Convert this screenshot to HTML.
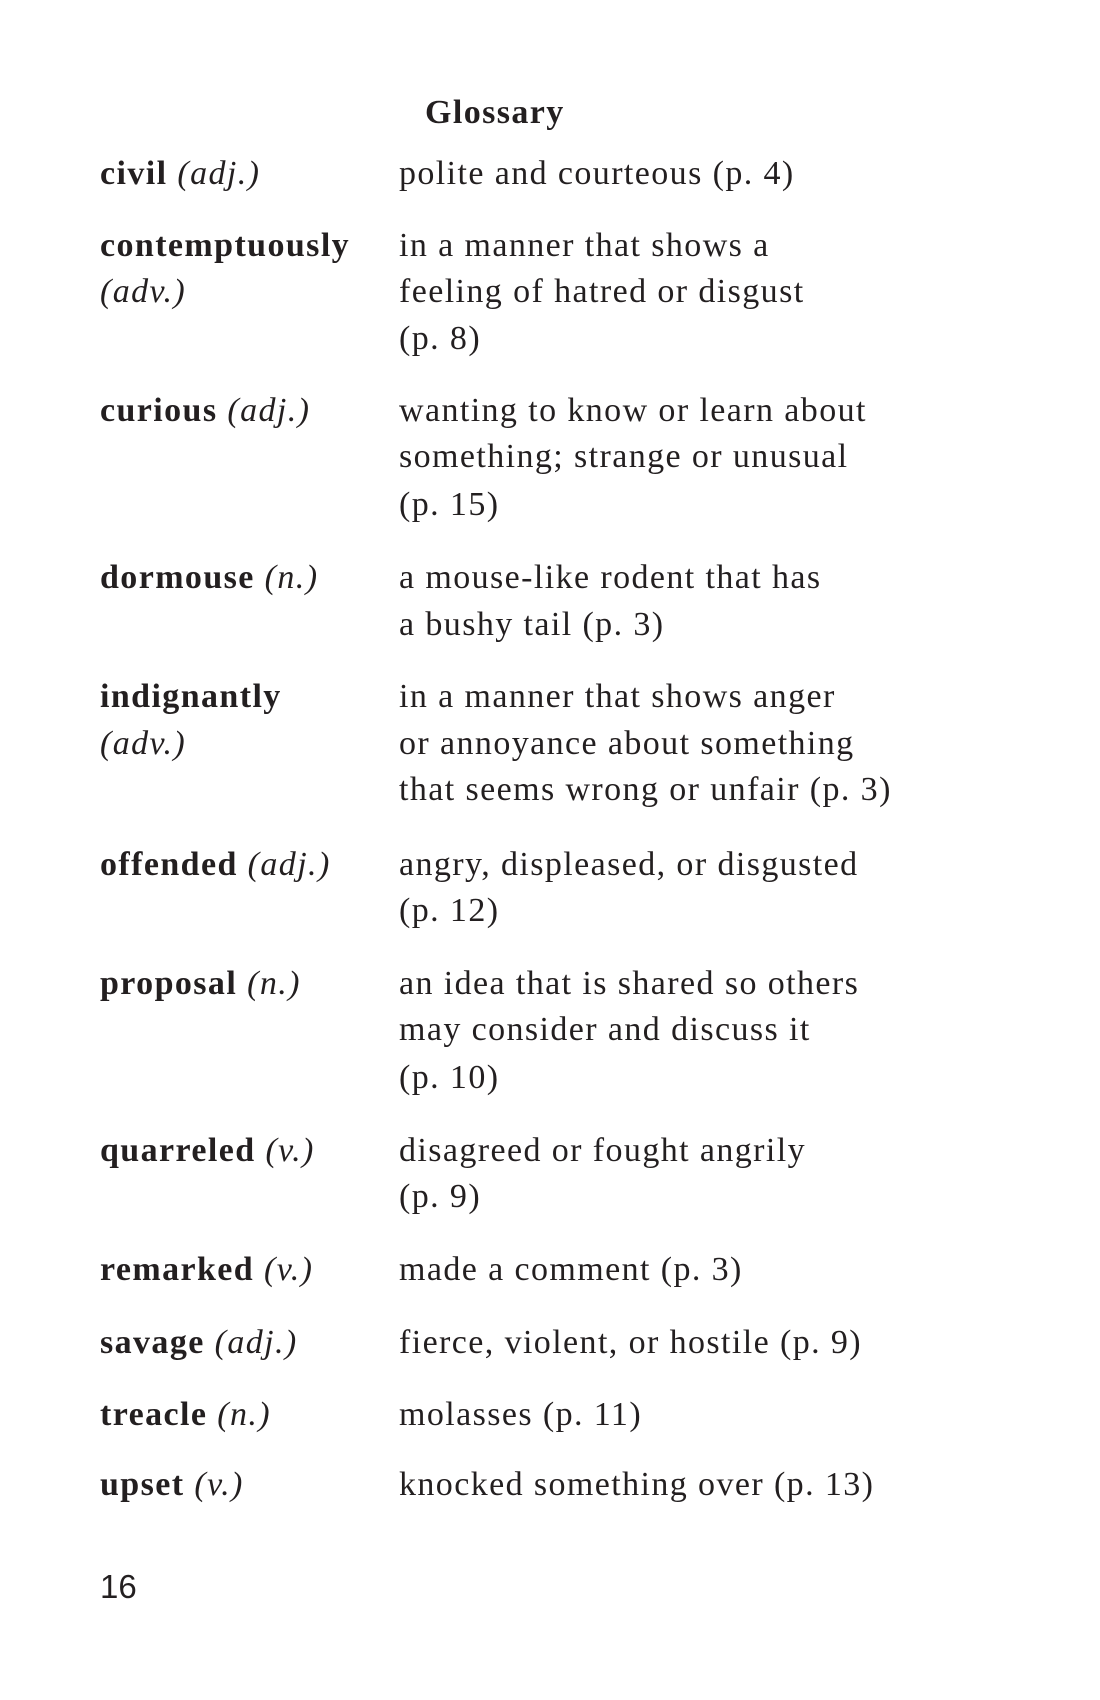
<!DOCTYPE html>
<html><head><meta charset="utf-8"><style>
body{margin:0;width:1100px;height:1700px;background:#fff;position:relative;font-family:"Liberation Serif",serif;color:#231f20;}
div{position:absolute;font-size:34px;letter-spacing:1.4px;line-height:48px;white-space:nowrap;}
.l{left:100px}.r{left:399px}
b{font-weight:bold}
i{font-style:italic}
</style></head><body>
<div style="left:425px;top:89px"><b>Glossary</b></div>
<div class="l" style="top:150px"><b>civil</b> <i>(adj.)</i></div>
<div class="r" style="top:150px">polite and courteous (p. 4)</div>
<div class="l" style="top:222px"><b>contemptuously</b></div>
<div class="l" style="top:268px"><i>(adv.)</i></div>
<div class="r" style="top:222px">in a manner that shows a</div>
<div class="r" style="top:268px">feeling of hatred or disgust</div>
<div class="r" style="top:315px">(p. 8)</div>
<div class="l" style="top:387px"><b>curious</b> <i>(adj.)</i></div>
<div class="r" style="top:387px">wanting to know or learn about</div>
<div class="r" style="top:433px">something; strange or unusual</div>
<div class="r" style="top:481px">(p. 15)</div>
<div class="l" style="top:554px"><b>dormouse</b> <i>(n.)</i></div>
<div class="r" style="top:554px">a mouse-like rodent that has</div>
<div class="r" style="top:601px">a bushy tail (p. 3)</div>
<div class="l" style="top:673px"><b>indignantly</b></div>
<div class="l" style="top:720px"><i>(adv.)</i></div>
<div class="r" style="top:673px">in a manner that shows anger</div>
<div class="r" style="top:720px">or annoyance about something</div>
<div class="r" style="top:766px">that seems wrong or unfair (p. 3)</div>
<div class="l" style="top:841px"><b>offended</b> <i>(adj.)</i></div>
<div class="r" style="top:841px">angry, displeased, or disgusted</div>
<div class="r" style="top:887px">(p. 12)</div>
<div class="l" style="top:960px"><b>proposal</b> <i>(n.)</i></div>
<div class="r" style="top:960px">an idea that is shared so others</div>
<div class="r" style="top:1006px">may consider and discuss it</div>
<div class="r" style="top:1054px">(p. 10)</div>
<div class="l" style="top:1127px"><b>quarreled</b> <i>(v.)</i></div>
<div class="r" style="top:1127px">disagreed or fought angrily</div>
<div class="r" style="top:1173px">(p. 9)</div>
<div class="l" style="top:1246px"><b>remarked</b> <i>(v.)</i></div>
<div class="r" style="top:1246px">made a comment (p. 3)</div>
<div class="l" style="top:1319px"><b>savage</b> <i>(adj.)</i></div>
<div class="r" style="top:1319px">fierce, violent, or hostile (p. 9)</div>
<div class="l" style="top:1391px"><b>treacle</b> <i>(n.)</i></div>
<div class="r" style="top:1391px">molasses (p. 11)</div>
<div class="l" style="top:1461px"><b>upset</b> <i>(v.)</i></div>
<div class="r" style="top:1461px">knocked something over (p. 13)</div>
<div class="l" style="top:1563px;font-family:'Liberation Sans',sans-serif;font-size:33px;letter-spacing:0">16</div>
</body></html>
